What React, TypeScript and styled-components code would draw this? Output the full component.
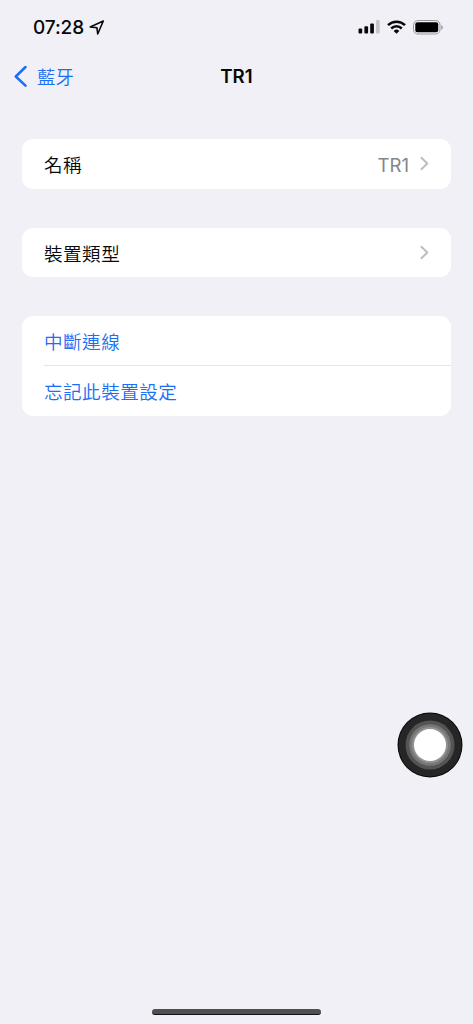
import React from "react";
import styled, { createGlobalStyle } from "styled-components";

const Global = createGlobalStyle`
  * { box-sizing: border-box; }
  html, body { margin: 0; background: #f1f0f6; }
`;

const Screen = styled.main`
  position: relative;
  width: 100%;
  height: 1024px;
  overflow: hidden;
  display: flex;
  flex-direction: column;
  background: #f1f0f6;
  color: #080808;
  font-family: Inter, "Noto Sans CJK TC", sans-serif;
`;

const StatusBar = styled.header`
  height: 54px;
  padding: 0 30px 0 33px;
  display: flex;
  align-items: center;
  justify-content: space-between;
`;

const Clock = styled.div`
  display: flex;
  align-items: center;
  gap: 5px;
  padding-top: 1px;
  font-size: 19px;
  font-weight: 500;
  line-height: 24px;
  letter-spacing: -0.1px;
`;

const Indicators = styled.div`
  display: flex;
  align-items: center;
  gap: 7px;
`;

const NavBar = styled.nav`
  height: 45px;
  padding: 0 14px;
  display: grid;
  grid-template-columns: 1fr auto 1fr;
  align-items: center;
`;

const BackButton = styled.button`
  display: flex;
  align-items: center;
  gap: 10px;
  padding: 0 0 2px;
  border: 0;
  background: none;
  color: #1b6ff3;
  font: 350 18.4px/26px "Noto Sans CJK TC", sans-serif;
`;

const Title = styled.h1`
  margin: 0;
  font-size: 18.7px;
  font-weight: 600;
  line-height: 24px;
`;

const Groups = styled.section`
  padding: 40px 22px 0;
  display: flex;
  flex-direction: column;
  gap: 39px;
`;

const Card = styled.div`
  overflow: hidden;
  border-radius: 11px;
  background: #fff;
`;

const Row = styled.div<{ $action?: boolean; $divided?: boolean }>`
  height: ${(p) => (p.$divided ? 50 : 49.5)}px;
  margin-left: 22px;
  padding-right: 22px;
  display: flex;
  align-items: center;
  border-bottom: ${(p) => (p.$divided ? "1px solid #e5e5e7" : "0")};
  color: ${(p) => (p.$action ? "#1b6ff3" : "#080808")};
`;

const Label = styled.span`
  flex: 1;
  padding-top: 1px;
  font: 350 18.6px/28px "Noto Sans CJK TC", sans-serif;
  letter-spacing: 0.45px;
`;

const Value = styled.span`
  margin-right: 11px;
  padding-top: 3px;
  color: #858587;
  font-size: 18.6px;
  line-height: 24px;
`;

const AssistiveTouch = styled.div`
  position: absolute;
  left: 397px;
  top: 712px;
  width: 66px;
  height: 66px;
`;

const HomeIndicator = styled.div`
  position: absolute;
  left: 152px;
  bottom: 9px;
  width: 169px;
  height: 6px;
  border-radius: 3px;
  background: #505052;
  border-bottom: 1px solid #111;
`;

const Chevron = () => (
  <svg width="9" height="15" viewBox="0 0 9 15" fill="none" stroke="#bdbdbf" strokeWidth="1.9" strokeLinecap="round" strokeLinejoin="round">
    <path d="M1.4 1.7 7.300 7.500 1.4 13.300" />
  </svg>
);

export default function App() {
  return (
    <Screen>
      <Global />
      <StatusBar>
        <Clock>
          07:28
          <svg width="16" height="16" viewBox="0 0 16 16" fill="none" stroke="#080808" strokeWidth="1.6" strokeLinejoin="round">
            <path d="M14.300 1 1.200 6.900 7.900 7.700 8.700 14Z" />
          </svg>
        </Clock>
        <Indicators>
          <svg width="22" height="14" viewBox="0 0 22 14" fill="#080808">
            <rect x="0.5" y="8.5" width="3.7" height="5" rx="1" />
            <rect x="6.4" y="6.3" width="3.7" height="7.2" rx="1" />
            <rect x="12.2" y="3.4" width="3.7" height="10.1" rx="1" />
            <rect x="18" y="0" width="3.7" height="13.5" rx="1" fill="#c6c6ca" />
          </svg>
          <svg width="19" height="14" viewBox="0 0 19 14" fill="none" stroke="#080808" strokeWidth="2.5">
            <path d="M1 5.1a12.2 12.2 0 0 1 17 0M4.2 8.5a7.6 7.6 0 0 1 10.6 0" />
            <path d="M6.7 10.9a4 4 0 0 1 5.6 0L9.5 13.8Z" fill="#080808" stroke="none" />
          </svg>
          <svg width="30" height="15" viewBox="0 0 30 15">
            <rect x="0.5" y="0.5" width="26.500" height="13.500" rx="4.300" fill="none" stroke="#98989b" />
            <rect x="2.300" y="2.300" width="22.900" height="9.900" rx="2" fill="#000" />
            <path d="M28.300 5c2 .8 2 4.200 0 5Z" fill="#98989b" />
          </svg>
        </Indicators>
      </StatusBar>
      <NavBar>
        <BackButton>
          <svg width="13" height="22" viewBox="0 0 13 22" fill="none" stroke="currentColor" strokeWidth="2.5" strokeLinecap="round" strokeLinejoin="round">
            <path d="M11.500 2 1.800 11.500 11.500 20.700" />
          </svg>
          藍牙
        </BackButton>
        <Title>TR1</Title>
      </NavBar>
      <Groups>
        <Card>
          <Row><Label>名稱</Label><Value>TR1</Value><Chevron /></Row>
        </Card>
        <Card>
          <Row><Label>裝置類型</Label><Chevron /></Row>
        </Card>
        <Card>
          <Row $action $divided><Label>中斷連線</Label></Row>
          <Row $action><Label>忘記此裝置設定</Label></Row>
        </Card>
      </Groups>
      <AssistiveTouch>
        <svg width="66" height="66" viewBox="0 0 66 66">
          <circle cx="33" cy="33" r="32.500" fill="#080808" />
          <circle cx="33" cy="33" r="31.500" fill="#262626" />
          <circle cx="33" cy="33" r="24.500" fill="#545454" />
          <circle cx="33" cy="33" r="20.800" fill="#777" />
          <circle cx="33" cy="33" r="18" fill="#929292" />
          <circle cx="33" cy="33" r="16" fill="#fff" />
        </svg>
      </AssistiveTouch>
      <HomeIndicator />
    </Screen>
  );
}
